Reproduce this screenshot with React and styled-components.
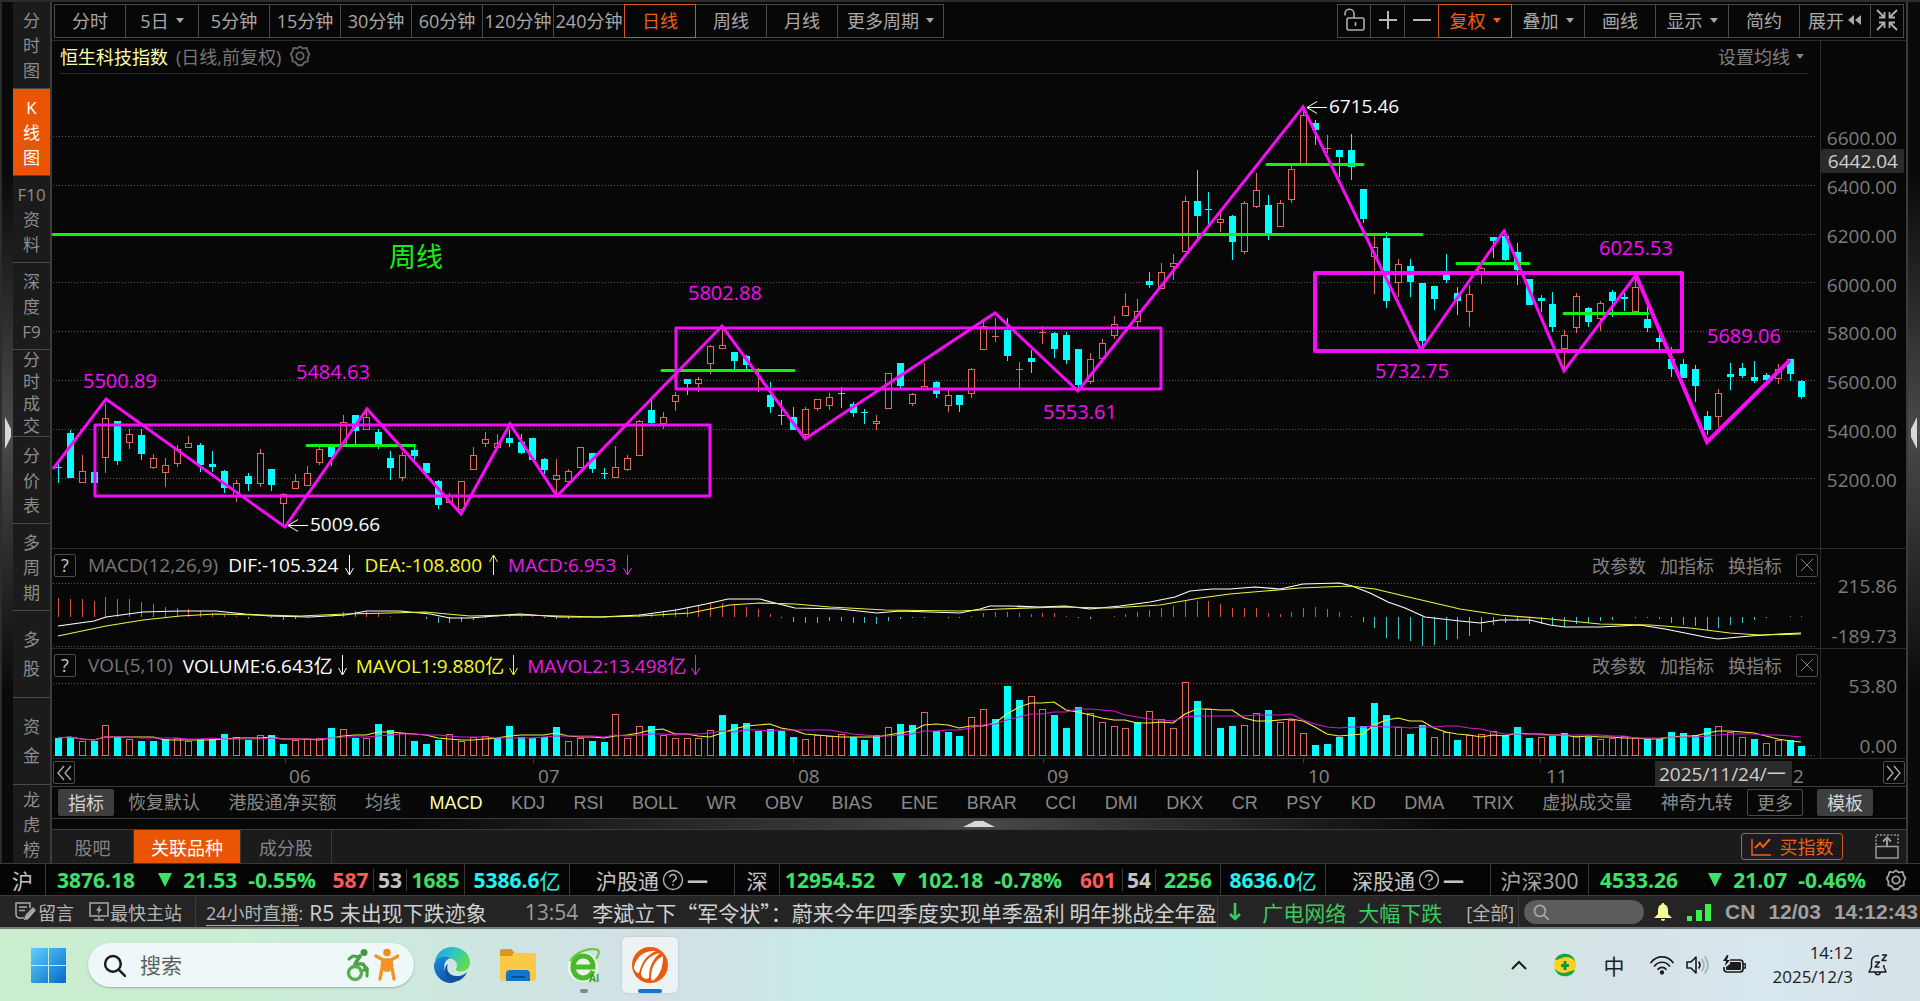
import React, { useState } from 'react';
import styled, { createGlobalStyle, css } from 'styled-components';

const GlobalStyle = createGlobalStyle`
  * { box-sizing: border-box; }

  html, body {
    margin: 0;
    padding: 0;
    background: #070707;
  }

  body, button, input {
    font-family: 'Open Sans', 'Noto Sans CJK SC', sans-serif;
    font-size: 18px;
    font-weight: 400;
  }

  button {
    margin: 0;
    padding: 0;
    border: none;
    background: none;
    color: inherit;
    cursor: pointer;
    white-space: nowrap;
  }

  svg { display: block; flex-shrink: 0; }
`;

/* ---------- data ---------- */

const UP = 1;
const DOWN = 0;

const SIDE_TABS = [
  ['分', '时', '图'],
  ['K', '线', '图'],
  ['F10', '资', '料'],
  ['深', '度', 'F9'],
  ['分', '时', '成', '交'],
  ['分', '价', '表'],
  ['多', '周', '期'],
  ['多', '股'],
  ['资', '金'],
  ['龙', '虎', '榜'],
];

const PERIODS = [
  { label: '分时', w: 72 },
  { label: '5日', w: 74, menu: true },
  { label: '5分钟', w: 72 },
  { label: '15分钟', w: 72 },
  { label: '30分钟', w: 72 },
  { label: '60分钟', w: 72 },
  { label: '120分钟', w: 72 },
  { label: '240分钟', w: 72 },
  { label: '日线', w: 72 },
  { label: '周线', w: 72 },
  { label: '月线', w: 72 },
  { label: '更多周期', w: 107, menu: true },
];

const INDICATORS = [
  '恢复默认', '港股通净买额', '均线', 'MACD', 'KDJ', 'RSI', 'BOLL', 'WR', 'OBV', 'BIAS', 'ENE',
  'BRAR', 'CCI', 'DMI', 'DKX', 'CR', 'PSY', 'KD', 'DMA', 'TRIX', '虚拟成交量', '神奇九转',
];

const PRICE_TICKS = [
  '6600.00', '6400.00', '6200.00', '6000.00', '5800.00', '5600.00', '5400.00', '5200.00',
];

// [direction, high, body top, body bottom, low]
const CANDLES = [
  [0, 463, 467, 468, 483], [0, 430, 433, 478, 478], [1, 455, 471, 482, 483], [0, 470, 472, 483, 483],
  [1, 404, 418, 457, 473], [0, 421, 421, 461, 465], [1, 429, 434, 442, 449], [0, 429, 435, 454, 460],
  [1, 454, 458, 467, 469], [1, 458, 465, 472, 487], [1, 445, 449, 463, 467], [1, 436, 443, 447, 448],
  [0, 443, 445, 465, 472], [0, 451, 464, 467, 472], [0, 470, 471, 488, 493], [1, 480, 483, 495, 502],
  [0, 473, 476, 484, 491], [1, 449, 453, 483, 487], [0, 469, 469, 485, 491], [1, 493, 494, 503, 527],
  [1, 474, 481, 488, 489], [1, 466, 473, 485, 486], [1, 447, 449, 462, 465], [0, 446, 447, 457, 466],
  [1, 415, 422, 446, 447], [0, 415, 415, 431, 444], [1, 410, 417, 429, 429], [0, 429, 432, 444, 449],
  [0, 451, 458, 468, 480], [1, 452, 455, 477, 481], [0, 445, 450, 456, 460], [0, 463, 463, 473, 478],
  [0, 480, 481, 505, 509], [1, 493, 495, 502, 503], [1, 481, 481, 509, 510], [1, 447, 455, 469, 470],
  [1, 432, 439, 443, 447], [1, 434, 443, 447, 447], [0, 430, 438, 443, 447], [0, 434, 442, 453, 454],
  [0, 438, 438, 460, 461], [0, 458, 459, 470, 474], [1, 459, 475, 479, 495], [1, 469, 471, 481, 482],
  [1, 447, 447, 467, 468], [0, 453, 453, 469, 473], [0, 468, 473, 474, 479], [1, 446, 467, 477, 478],
  [1, 455, 458, 469, 471], [1, 420, 421, 455, 455], [0, 398, 410, 423, 424], [1, 412, 417, 423, 429],
  [1, 392, 395, 401, 411], [0, 379, 379, 384, 395], [1, 377, 379, 383, 392], [1, 345, 346, 363, 374],
  [1, 326, 345, 348, 348], [0, 352, 352, 361, 369], [0, 355, 356, 365, 369], [1, 368, 371, 372, 392],
  [0, 382, 395, 407, 413], [0, 400, 415, 416, 425], [0, 407, 417, 430, 430], [1, 407, 409, 434, 438],
  [1, 399, 399, 408, 411], [1, 393, 397, 405, 410], [0, 387, 393, 394, 408], [0, 402, 404, 413, 417],
  [0, 409, 412, 413, 424], [1, 415, 421, 423, 430], [1, 373, 373, 408, 408], [0, 363, 363, 386, 388],
  [1, 393, 394, 403, 406], [1, 363, 386, 389, 389], [0, 381, 382, 394, 398], [1, 390, 395, 405, 412],
  [0, 395, 395, 405, 412], [1, 368, 369, 393, 398], [1, 322, 326, 349, 349], [1, 318, 336, 337, 342],
  [0, 318, 330, 356, 361], [1, 362, 369, 370, 388], [0, 350, 358, 362, 373], [1, 326, 332, 333, 344],
  [0, 332, 333, 349, 358], [0, 332, 335, 360, 364], [0, 349, 349, 385, 388], [1, 353, 359, 381, 384],
  [1, 339, 343, 358, 363], [1, 316, 324, 335, 339], [1, 293, 306, 315, 316], [1, 299, 311, 321, 327],
  [0, 272, 281, 285, 288], [1, 263, 272, 288, 289], [1, 254, 263, 266, 280], [1, 196, 201, 251, 251],
  [0, 170, 201, 216, 239], [0, 192, 209, 210, 225], [1, 213, 219, 222, 232], [0, 215, 216, 242, 260],
  [1, 201, 203, 251, 254], [1, 173, 190, 206, 208], [0, 195, 205, 234, 240], [1, 200, 203, 226, 226],
  [1, 165, 169, 199, 203], [1, 107, 115, 164, 164], [0, 120, 123, 130, 145], [1, 135, 148, 149, 153],
  [0, 150, 150, 157, 177], [0, 134, 150, 167, 180], [0, 189, 189, 219, 223], [1, 235, 247, 256, 294],
  [0, 232, 238, 301, 308], [1, 259, 264, 282, 297], [0, 259, 266, 282, 297], [0, 283, 283, 341, 350],
  [0, 286, 286, 299, 310], [0, 254, 274, 280, 283], [0, 287, 293, 301, 315], [1, 285, 294, 311, 327],
  [1, 267, 268, 274, 284], [0, 237, 237, 241, 258], [0, 230, 236, 260, 261], [0, 243, 252, 270, 285],
  [0, 279, 279, 305, 305], [0, 295, 298, 301, 312], [0, 292, 304, 327, 332], [1, 330, 335, 348, 368],
  [1, 293, 296, 327, 333], [0, 307, 308, 322, 327], [1, 301, 303, 318, 331], [0, 290, 292, 301, 317],
  [0, 293, 297, 299, 311], [1, 278, 287, 311, 312], [0, 303, 319, 328, 332], [0, 331, 338, 342, 349],
  [0, 347, 359, 369, 377], [0, 359, 364, 378, 378], [0, 365, 369, 386, 402], [0, 411, 416, 430, 435],
  [1, 389, 393, 416, 427], [0, 363, 374, 377, 390], [0, 363, 368, 376, 378], [0, 361, 377, 381, 383],
  [0, 373, 375, 380, 382], [1, 364, 369, 378, 384], [0, 359, 359, 374, 381], [0, 380, 381, 397, 399],
];

const MACD_BARS = [
  19, 18, 18, 16, 20, 18, 18, 15, 13, 10, 9, 8, 6, 4, 2, 1, -2, 0, -1, -3, -2, -1, 0, 1, 5, 6, 6, 4, 1, 0,
  0, -2, -6, -6, -5, -3, -1, 1, 2, 1, 1, -1, -2, -2, -1, 0, -1, 0, 1, 3, 3, 6, 8, 10, 12, 15, 14, 13, 10, 8,
  3, -1, -5, -6, -6, -4, -4, -6, -6, -7, -4, -2, -1, -1, 0, -1, -1, 1, 4, 5, 5, 4, 3, 4, 4, 1, -1, -2, 0, 1,
  3, 5, 7, 9, 11, 16, 16, 16, 13, 9, 9, 9, 4, 3, 5, 9, 10, 8, 5, 1, -5, -11, -21, -22, -24, -29, -28, -23,
  -22, -19, -15, -8, -6, -4, -7, -7, -8, -10, -7, -6, -4, -3, 0, -1, -1, -2, -6, -8, -9, -13, -11, -8, -6,
  -3, -1, 0, 1, 1,
];

const DIF_POINTS = '58,626 94,621 106,617 143,612 180,611 216,611 245,614 270,616 310,617 345,615 367,611 400,611 430,614 450,618 470,618 495,616 520,614 560,617 600,617 640,615 676,610 706,604 728,599 760,599 775,603 795,608 840,609 877,613 900,611 960,613 980,609 990,606 1010,606 1040,607 1065,606 1090,609 1120,606 1150,602 1175,597 1190,591 1212,589 1230,589 1255,587 1280,589 1303,584 1340,583 1352,586 1370,593 1388,602 1405,608 1425,617 1460,621 1480,623 1500,620 1530,620 1550,625 1565,627 1600,627 1640,625 1665,629 1685,633 1705,637 1718,639 1750,636 1780,634 1801,633';
const DEA_POINTS = '58,636 106,626 143,620 180,616 216,614 300,616 345,614 390,613 425,612 470,616 520,615 600,617 640,616 690,613 730,605 760,603 795,604 830,607 885,610 960,611 1000,609 1060,607 1110,608 1160,605 1200,598 1230,594 1265,591 1300,588 1350,586 1375,589 1400,595 1430,602 1460,609 1500,615 1550,619 1600,624 1650,625 1690,628 1730,633 1760,635 1801,634';

// tops of the volume bars, negative for a falling day
const VOLUME_BASE = 288;
const VOLUME_TOPS = [
  -234, -230, 247, -243, 199, -230, 240, -243, -243, -237, 238, 245, -237, -237, -222, 235, -240, 229, -225,
  -252, 243, 240, 238, -204, 211, -234, 238, -192, -210, 222, -243, -252, -240, 226, 245, 235, 232, -235,
  -198, -230, -234, -231, -202, 247, 238, -243, -246, 166, 236, 202, -198, 229, 238, 236, 236, 213, -165,
  -192, -189, -213, -207, -213, -231, 241, 229, 232, 226, -232, -240, -226, 205, -192, -195, 160, -214, -216,
  -228, 175, 151, -177, -78, -120, 112, 151, -165, -204, -141, 163, 190, 202, 208, -187, 157, 181, 208, 70,
  -123, 151, -204, -198, 199, 163, -150, 190, 184, 223, -255, -252, -231, -171, -198, -129, -165, 205, -222,
  -195, 235, 220, -240, 228, 226, 217, -225, -201, -234, 235, -228, -220, 232, -230, 241, 238, 232, 236,
  -237, -236, -216, -219, -226, -204, 202, 220, 235, -237, 253, 244, -240, -258,
];

const ZIGZAG = '53,469 106,399 285,527 367,409 461,514 510,424 557,496 722,326 805,439 995,313 1078,391 1303,107 1421,350 1504,231 1564,371 1636,275';

const PRICE_BOXES = [
  { x: 95, y: 425, w: 615, h: 71, stroke: 3 },
  { x: 676, y: 328, w: 485, h: 61, stroke: 3 },
  { x: 1315, y: 273, w: 367, h: 78, stroke: 4 },
];

const LEVELS = [
  [53, 1422, 234], [307, 415, 445], [662, 794, 370], [1267, 1363, 164], [1457, 1529, 263], [1564, 1648, 313],
];

const MARKS = [
  ['5500.89', 83, 388], ['5484.63', 296, 379], ['5802.88', 688, 300], ['5553.61', 1043, 419],
  ['5732.75', 1375, 378], ['6025.53', 1599, 255], ['5689.06', 1707, 343],
];

const MONTHS = [
  ['06', 289, 285], ['07', 538, 533], ['08', 798, 793], ['09', 1047, 1043], ['10', 1308, 1303], ['11', 1546, 1540],
];

const barX = i => Math.round(58 + i * 11.86);

const movingAverage = n => VOLUME_TOPS.map((_, i) => {
  const part = VOLUME_TOPS.slice(Math.max(0, i - n + 1), i + 1);
  const mean = part.reduce((sum, v) => sum + Math.abs(v), 0) / part.length;
  return `${barX(i)},${Math.round(660 + mean / 3)}`;
}).join(' ');

/* ---------- frame ---------- */

const Page = styled.div`
  min-height: 100vh;
  display: flex;
  flex-direction: column;
  color: #9a9a9a;
`;

const Workspace = styled.div`
  display: flex;
  height: 864px;
  border-top: 2px solid #2c2c2c;
  border-bottom: 1px solid #3a3a3a;
`;

const EdgeStrip = styled.button`
  flex: 0 0 ${p => p.$right ? 14 : 13}px;
  display: flex;
  align-items: center;
  justify-content: center;
  border-left: ${p => p.$right ? '2px solid #3a3a3a' : '2px solid #2c2c2c'};
  background: linear-gradient(#0a0a0a 20%, #4a4a4a 50%, #0a0a0a 80%);
`;

const SideNav = styled.nav`
  flex: 0 0 39px;
  display: flex;
  flex-direction: column;
  background: #1b1b1b;
  border-right: 2px solid #3c3c3c;
`;

const SideTab = styled.button`
  flex: 0 0 87px;
  min-height: 0;
  display: flex;
  flex-direction: column;
  align-items: center;
  justify-content: center;
  border-bottom: 1px solid #4a4a4a;
  font-size: 17px;
  line-height: ${p => p.$lines === 4 ? 22 : p.$lines === 2 ? 29 : 25}px;
  color: #8c8c8c;

  &:last-child {
    flex: 1;
    border-bottom: none;
  }

  ${p => p.$active && css`
    background: #ea5504;
    color: #fff;
  `}
`;

const Main = styled.main`
  flex: 1;
  min-width: 0;
  display: flex;
  flex-direction: column;
`;

/* ---------- toolbar ---------- */

const Toolbar = styled.div`
  height: 39px;
  display: flex;
  align-items: center;
  justify-content: space-between;
  padding: 0 3px 0 2px;
  border-bottom: 1px solid #2a2a2a;
`;

const ToolGroup = styled.div`
  display: flex;
`;

const ToolBtn = styled.button`
  width: ${p => p.$w}px;
  height: 34px;
  margin-right: -1px;
  padding-bottom: 2px;
  display: flex;
  align-items: center;
  justify-content: center;
  gap: ${p => p.$tight ? 4 : 7}px;
  border: 1px solid #4a4a4a;
  color: #a8a8a8;
  position: relative;

  ${p => p.$active && css`
    z-index: 1;
    border-color: #d2571c;
    color: #ee5f1a;
  `}
`;

const Caret = styled.span`
  width: 0;
  height: 0;
  border: 4px solid transparent;
  border-top: 5px solid currentColor;
  border-bottom: none;
`;

/* ---------- charts ---------- */

const Panel = styled.section`
  display: flex;
  border-bottom: 1px solid #2a2a2a;
`;

const Plot = styled.div`
  flex: 1;
  min-width: 0;
`;

const Canvas = styled.svg`
  width: 100%;
  height: auto;
  overflow: visible;
  font-size: 19px;
`;

const Axis = styled.div`
  flex: 0 0 86px;
  position: relative;
  display: flex;
  flex-direction: column;
  justify-content: space-between;
  padding: ${p => p.$pad};
  border-left: 1px solid #2c2c2c;
  font-size: 19px;
  line-height: 24px;
  text-align: right;
  color: #7d7d7d;
`;

const CursorPrice = styled.div`
  position: absolute;
  top: 108px;
  right: 2px;
  left: 0;
  padding-right: 6px;
  border-radius: 2px;
  background: #2b2b2b;
  color: #cfcfcf;
`;

const TitleRow = styled.div`
  height: 33px;
  margin: 0 12px 0 8px;
  padding-bottom: 2px;
  display: flex;
  align-items: center;
  gap: 8px;
  border-bottom: 1px solid #2a2a2a;
`;

const Symbol = styled.h1`
  margin: 0;
  font-size: 18px;
  font-weight: 400;
  color: #ffffa8;
`;

const Muted = styled.span`
  color: #777;
`;

const AverageBtn = styled.button`
  margin-left: auto;
  display: flex;
  align-items: center;
  gap: 6px;
  padding-right: 4px;
  color: #808080;
`;

const StudyRow = styled.div`
  height: 34px;
  padding: 0 2px 2px;
  display: flex;
  align-items: center;
  font-size: 19px;
`;

const SquareBtn = styled.button`
  width: 22px;
  height: 23px;
  display: flex;
  align-items: center;
  justify-content: center;
  border: 1px solid #4c4c4c;
  border-radius: 2px;
  font-size: 18px;
  line-height: 20px;
  color: ${p => p.$dim ? '#808080' : '#c8c8c8'};
`;

const StudyName = styled.span`
  margin: 0 10px 0 12px;
  color: #777;
`;

const Reading = styled.span`
  display: flex;
  align-items: center;
  gap: ${p => p.$tight ? 4 : 6}px;
  margin-right: ${p => p.$tight ? 9 : 10}px;
  color: ${p => p.$color};
`;

const StudyActions = styled.div`
  margin-left: auto;
  display: flex;
  align-items: center;
  gap: 14px;
  color: #828282;
`;

const TimeRow = styled.div`
  height: 28px;
  display: flex;
  position: relative;
  border-bottom: 1px solid #3c3c3c;
`;

const TimeSpacer = styled.div`
  flex: 0 0 86px;
`;

const ScrollBtn = styled(SquareBtn)`
  position: absolute;
  top: 2px;
  ${p => p.$end ? 'right: 1px;' : 'left: 1px;'}
`;

/* ---------- indicators and tabs ---------- */

const IndicatorRow = styled.div`
  height: 32px;
  padding: 0 33px 0 6px;
  display: flex;
  align-items: center;
  gap: 14px;
  border-bottom: 1px solid #3c3c3c;
`;

const IndicatorList = styled.div`
  flex: 1;
  display: flex;
  align-items: baseline;
  justify-content: space-between;
`;

const IndicatorBtn = styled.button`
  font-family: 'Liberation Sans', 'Noto Sans CJK SC', sans-serif;
  line-height: 26px;
  color: ${p => p.$active ? '#ffffa8' : '#8a8a8a'};
`;

const ChipBtn = styled.button`
  width: 56px;
  height: 27px;
  border-radius: 2px;
  border: 1px solid ${p => p.$filled ? '#3e3e3e' : '#4a4a4a'};
  background: ${p => p.$filled ? '#3e3e3e' : 'transparent'};
  color: ${p => p.$filled ? '#d4d4d4' : '#8a8a8a'};
  line-height: 24px;
`;

const Splitter = styled.button`
  height: 11px;
  width: 100%;
  display: flex;
  align-items: center;
  justify-content: center;
  border-bottom: 1px solid #3c3c3c;
  background: linear-gradient(90deg, #070707 18%, #484848 50%, #070707 76%);
`;

const TabRow = styled.div`
  flex: 1;
  padding-right: 7px;
  display: flex;
  align-items: center;
  background: #1b1b1b;
`;

const Tab = styled.button`
  align-self: stretch;
  width: ${p => p.$w}px;
  border-right: 1px solid #383838;
  color: #858585;

  ${p => p.$active && css`
    background: #ea5504;
    color: #fff;
  `}
`;

const BuyBtn = styled.button`
  width: 102px;
  height: 27px;
  margin-left: auto;
  margin-right: 32px;
  display: flex;
  align-items: center;
  justify-content: center;
  gap: 9px;
  border: 1px solid #d2571c;
  border-radius: 3px;
  color: #ee5f1a;
  line-height: 24px;
`;

/* ---------- quote bar ---------- */

const QuoteBar = styled.div`
  height: 32px;
  display: flex;
  align-items: center;
  border-bottom: 1px solid #3a3a3a;
  background: #050505;
  font-size: 21px;
  color: #c4c4c4;
`;

const QuoteCell = styled.div`
  flex: 0 0 ${p => p.$w}px;
  height: ${p => p.$inner ? 22 : 31}px;
  display: flex;
  align-items: center;
  justify-content: center;
  gap: ${p => p.$gap || 0}px;
  border-right: ${p => p.$rule ? '1px solid #3a3a3a' : 'none'};
  color: ${p => p.$color || 'inherit'};
  font-weight: ${p => p.$bold ? 700 : 400};
  white-space: nowrap;

  i {
    font-style: normal;
    font-weight: 400;
  }

  b { font-weight: 700; }
`;

const GearBtn = styled.button`
  margin-left: auto;
  margin-right: 20px;
`;

const Triangle = styled.span`
  width: 0;
  height: 0;
  border: 7px solid transparent;
  border-top: 14px solid #3ee068;
  border-bottom: none;
`;

/* ---------- news bar ---------- */

const NewsBar = styled.div`
  height: 33px;
  display: flex;
  align-items: center;
  border-bottom: 2px solid #767c79;
  background: #242424;
  white-space: nowrap;
  color: #b4b4b4;
`;

const NewsTool = styled.button`
  display: flex;
  align-items: center;
  gap: ${p => p.$close ? 1 : 2}px;
  margin-left: ${p => p.$near ? 10 : 15}px;
`;

const NewsSep = styled.span`
  width: 1px;
  height: 30px;
  margin-left: ${p => p.$gap || 0}px;
  background: #3c3c3c;
`;

const LiveLink = styled.a`
  margin-left: 10px;
  color: #b4b4b4;
  text-decoration: none;

  span { border-bottom: 1px solid #b4b4b4; }
`;

const Marquee = styled.div`
  flex: 1;
  min-width: 0;
  height: 31px;
  margin-left: 6px;
  overflow: hidden;
  display: flex;
  align-items: center;
  gap: 14px;
  font-size: 21px;
  color: #d0d0d0;

  time {
    margin-left: 24px;
    color: #9c9c9c;
  }
`;

const Headline = styled.span`
  font-family: 'Noto Sans CJK SC', sans-serif;
`;

const Alert = styled.a`
  display: flex;
  align-items: center;
  gap: 12px;
  margin: 0 24px 0 10px;
  font-size: 21px;
  color: #3dc85e;
  text-decoration: none;

  svg { margin-right: 8px; }
`;

const BarSearch = styled.label`
  width: 120px;
  height: 24px;
  margin-left: 5px;
  padding: 0 9px;
  display: flex;
  align-items: center;
  border-radius: 12px;
  background: #5c5c5c;

  input {
    width: 76px;
    border: none;
    outline: none;
    background: none;
    color: #ddd;
    font-size: 14px;
  }
`;

const Clock = styled.div`
  display: flex;
  gap: 13px;
  margin: 0 2px 0 14px;
  font-family: 'Liberation Sans', sans-serif;
  font-size: 21px;
  font-weight: 700;
  color: #a0a0a0;
`;

/* ---------- desktop taskbar ---------- */

const Taskbar = styled.footer`
  flex: 1;
  min-height: 72px;
  display: flex;
  align-items: center;
  padding: 0 32px 0 31px;
  background: linear-gradient(90deg, #caeccf 0%, #cbeed3 12%, #cde6e0 24%, #d2e0e6 34%, #c6eae6 44%, #c4ece6 62%, #c9ecdc 72%, #d6e2e6 84%, #d8e6ee 92%, #d6e2e8 100%);
  color: #1c1c1c;
`;

const TaskSearch = styled.label`
  width: 326px;
  height: 44px;
  margin: 0 10px 0 22px;
  padding: 0 15px;
  display: flex;
  align-items: center;
  gap: 12px;
  border-radius: 22px;
  background: #eff8f8;
  box-shadow: 0 1px 2px rgba(0, 0, 0, 0.25);

  input {
    flex: 1;
    min-width: 0;
    border: none;
    outline: none;
    background: none;
    font-size: 21px;
    color: #333;
  }

  input::placeholder { color: #5a5f60; opacity: 1; }
`;

const TaskApp = styled.button`
  position: relative;
  width: 56px;
  height: 56px;
  margin-right: 10px;
  display: flex;
  align-items: center;
  justify-content: center;
  border-radius: 5px;
  background: ${p => p.$active ? 'rgba(255,255,255,0.6)' : 'transparent'};
  box-shadow: ${p => p.$active ? '0 0 2px rgba(0,0,0,0.2)' : 'none'};

  &::after {
    content: '';
    position: absolute;
    bottom: 0;
    width: ${p => p.$active ? 24 : 8}px;
    height: 4px;
    border-radius: 2px;
    background: ${p => p.$active ? '#0a78d4' : p.$running ? '#7f8b8b' : 'transparent'};
  }
`;

const Tray = styled.div`
  margin-left: auto;
  display: flex;
  align-items: center;
`;

const TrayBtn = styled.button`
  margin-right: ${p => p.$gap}px;
  font-size: 21px;
`;

const TrayTime = styled.div`
  margin-right: 15px;
  font-size: 17px;
  line-height: 24px;
  text-align: right;
`;

/* ---------- icons ---------- */

const HexGear = ({ size = 22, color = '#666' }) => (
  <svg width={size} height={size} viewBox="0 0 24 24" fill="none" stroke={color} strokeWidth="2" strokeLinejoin="round">
    <path d="M12 1.5l3 2.2 4.2-.6 1.200 4 2 2.900-2 4 .2 3.600-3.800 1.400-2.800 3.500-2-.8-2 .8-2.800-3.500-3.600-1.400.2-3.600-2-4 2-2.900 1.200-4 4.200.6z" />
    <circle cx="12" cy="12" r="4" />
  </svg>
);

const TrendArrow = ({ up }) => (
  <svg width="10" height="22" viewBox="0 0 10 22" fill="none" stroke="currentColor" strokeWidth="1">
    <path d={up ? 'M5.5 1v20M1.5 8l4-7 4 7' : 'M5.5 1v20M1.5 14l4 7 4-7'} />
  </svg>
);

const LockIcon = () => (
  <svg width="22" height="24" viewBox="0 0 22 24" fill="none" stroke="#b0b0b0" strokeWidth="1.6">
    <rect x="4" y="10" width="17" height="12" rx="1.5" />
    <path d="M12.500 14v4M11 10V6a4.500 4.500 0 0 0-9-0.500v2" />
  </svg>
);

const RewindIcon = () => (
  <svg width="14" height="12" viewBox="0 0 14 12" fill="currentColor">
    <path d="M6 1v10L0 6zM13 1v10L7 6z" />
  </svg>
);

const ShrinkIcon = () => (
  <svg width="22" height="22" viewBox="0 0 22 22" fill="none" stroke="#b0b0b0" strokeWidth="1.8">
    <path d="M1 1l7 7M3 8.500h5.500V3M21 1l-7 7M19 8.500h-5.500V3M1 21l7-7M3 13.500h5.500V19M21 21l-7-7M19 13.500h-5.500V19" />
  </svg>
);

const CrossIcon = () => (
  <svg width="12" height="12" viewBox="0 0 12 12" stroke="currentColor"><path d="M0 0l12 12M12 0L0 12" /></svg>
);

const Chevrons = ({ flip }) => (
  <svg width="16" height="16" viewBox="0 0 16 16" fill="none" stroke="#b0b0b0" strokeWidth="1.3">
    <path d={flip ? 'M1 1l6 7-6 7M8 1l6 7-6 7' : 'M8 1L2 8l6 7M15 1L9 8l6 7'} />
  </svg>
);

const HelpCircle = () => (
  <svg width="22" height="22" viewBox="0 0 22 22" fill="none" stroke="#b4b4b4" strokeWidth="1.4">
    <circle cx="11" cy="11" r="9.500" />
    <path d="M7.800 8.500a3.200 3 0 1 1 4.600 2.700c-1 .6-1.400 1-1.400 2.200M11 15v1.800" />
  </svg>
);

const NoteIcon = () => (
  <svg width="21" height="19" viewBox="0 0 21 19" fill="none" stroke="#aaa" strokeWidth="1.500">
    <path d="M15 6V1H1v11c0 3 1 4 4 4h4M4 5h8M4 8.500h6M10 17l1-3.500 7-7.500 2 2-7 8z" />
    <path d="M11 17l8-9" strokeWidth="3" />
  </svg>
);

const StationIcon = () => (
  <svg width="20" height="19" viewBox="0 0 20 19" fill="none" stroke="#888" strokeWidth="2">
    <rect x="1" y="1" width="18" height="13" />
    <path d="M10 14v4M5 18h10" />
    <path d="M11.500 3L7 8.500h2.500L8.500 12.500 13 7h-2.500z" fill="#aaa" stroke="none" />
  </svg>
);

const SearchGlyph = ({ size, color, width = 2 }) => (
  <svg width={size} height={size} viewBox="0 0 22 22" fill="none" stroke={color} strokeWidth={width} strokeLinecap="round">
    <circle cx="9.500" cy="9.500" r="7.500" />
    <path d="M15 15l6 6" />
  </svg>
);

const BellIcon = () => (
  <svg width="18" height="18" viewBox="0 0 18 18" fill="#f7f79c">
    <path d="M9 0c1 0 1.500.7 1.500 1.500C13 2.200 14 4.500 14 7v4l4 4H0l4-4V7c0-2.500 1-4.800 3.500-5.500C7.500.7 8 0 9 0zM7 16h4c0 2.500-4 2.500-4 0z" />
  </svg>
);

const SignalIcon = () => (
  <svg width="24" height="18" viewBox="0 0 24 18" fill="#3ef04a">
    <path d="M0 13h5v5H0zM9 7h6v11H9zM18 1h6v17h-6z" />
  </svg>
);

const WindowsLogo = () => (
  <svg width="35" height="35" viewBox="0 0 35 35">
    <defs>
      <linearGradient id="win" x1="0" y1="0" x2="1" y2="1">
        <stop offset="0" stopColor="#5cd0fa" />
        <stop offset="1" stopColor="#0669ca" />
      </linearGradient>
    </defs>
    <path fill="url(#win)" d="M1 0h16v17H0V1q0-1 1-1zM18 0h16q1 0 1 1v16H18zM0 18h17v17H1q-1 0-1-1zM18 18h17v16q0 1-1 1H18z" />
  </svg>
);

const AccessArt = () => (
  <svg width="54" height="34" viewBox="0 0 54 34" fill="none" strokeLinecap="round" strokeLinejoin="round">
    <circle cx="19" cy="4.500" r="3.500" fill="#46953f" />
    <path d="M15 8l-5 8h8l4 6h-3" stroke="#4ba244" strokeWidth="3.600" />
    <path d="M15 9L8 8 4 11M22 20v8" stroke="#4ba244" strokeWidth="3" />
    <circle cx="10" cy="25" r="6.500" stroke="#58b04c" strokeWidth="3.400" />
    <circle cx="42" cy="4.500" r="3.800" fill="#f58b1e" />
    <path d="M31 8l7 4h8l7-4M38 12l-1 8-2 11M46 12l1 8 2 11M39 13l1 9h4l1-9" stroke="#f79226" strokeWidth="3.400" />
    <path d="M39 11h6v10h-6z" fill="#f79226" />
  </svg>
);

const EdgeLogo = () => (
  <svg width="36" height="36" viewBox="0 0 36 36">
    <defs>
      <linearGradient id="edgeTop" x1="0" y1="0" x2="1" y2="0.500">
        <stop offset="0" stopColor="#1f9ede" />
        <stop offset="0.500" stopColor="#30c4c8" />
        <stop offset="1" stopColor="#5fdc4a" />
      </linearGradient>
      <linearGradient id="edgeBody" x1="0" y1="0" x2="0.600" y2="1">
        <stop offset="0" stopColor="#1c8fdc" />
        <stop offset="1" stopColor="#0f4fa6" />
      </linearGradient>
    </defs>
    <path fill="url(#edgeTop)" d="M1 14C3 5 10 0 18 0c10 0 18 7 18 15 0 6-4 9.500-9 9.500-4 0-6-1.500-5-3 2-2 1.500-9-6-10C9 10.500 3 12 1 14z" />
    <path fill="url(#edgeBody)" d="M0 18C1 11 9 8 16 11c-5 2-7 7-5 13 2 5 7 9 13 9-2 2-5 3-8 3C7 35.500-.5 27 0 18z" />
    <path fill="#12509f" d="M14 17c-3 6 2 13 10 12 4 0 7-2 9-4-2 5-6 8-9 9-7 1-13-4-13-11 0-3 1-5 3-6z" />
  </svg>
);

const FolderIcon = () => (
  <svg width="36" height="34" viewBox="0 0 36 34">
    <path fill="#d99a1c" d="M0 3q0-2 2-2h9l4 4h-2v8H0z" />
    <path fill="#fbc948" d="M0 8h12l3-3h19q2 0 2 2v23q0 3-3 3H3q-3 0-3-3z" />
    <path fill="#1176c8" d="M6 33v-7q0-4 4-4h16q4 0 4 4v7z" />
    <path fill="#0a4f96" d="M11 28h14v2H11z" />
  </svg>
);

const BrowserIcon = () => (
  <svg width="34" height="36" viewBox="0 0 34 36" fill="none">
    <ellipse cx="16" cy="20" rx="15.500" ry="15" fill="#eaf7e6" />
    <path d="M26 24c-2 5-6 7-10 7-6 0-10-5-10-11S10 9 16 9s10 4 10 11H8" stroke="#4cb82c" strokeWidth="5" />
    <path d="M3 14C9 5 22 0 31 3c2 2 0 6-2 9" stroke="#62c840" strokeWidth="2" />
    <text x="22" y="35" fontSize="10" fontWeight="700" fill="#3c9c22">AI</text>
  </svg>
);

const BrokerLogo = () => (
  <svg width="38" height="38" viewBox="0 0 38 38">
    <circle cx="19" cy="19" r="18" fill="#ea5a0c" />
    <path fill="#fff" d="M3 21C5 11 13 4 25 5C16 9 11 15 8 27C6 27 3 25 3 21z" />
    <path fill="#fff" d="M10 27C12 17 18 9 29 7C22 13 18 20 18 32C14 34 10 31 10 27z" />
    <path fill="#fff" d="M20 32C20 22 24 14 32 10C32 19 30 28 23 34C21 35 20 34 20 32z" />
  </svg>
);

const GuardIcon = () => (
  <svg width="24" height="24" viewBox="0 0 24 24">
    <circle cx="12" cy="12" r="11" fill="#fbd224" />
    <path d="M2 7C4 2 9 0 14 1c4 .5 7 3 8 7-4-4-9-5-13-3-3 1-5 2-7 2zM22 17c-2 5-7 7-12 6-4-.5-7-3-8-7 4 4 9 5 13 3 3-1 5-2 7-2z" fill="#18a24a" />
    <path d="M12 8v9M8 12.500h8" stroke="#12983c" strokeWidth="3" />
  </svg>
);

const WifiIcon = () => (
  <svg width="24" height="20" viewBox="0 0 24 20" fill="none" stroke="#1c1c1c" strokeWidth="1.700" strokeLinecap="round">
    <path d="M1 7.500c6-7.500 16-7.500 22 0M4.500 11c4-5 11-5 15 0M8 14.300c2-2.700 6-2.700 8 0" />
    <circle cx="12" cy="17.500" r="1.300" fill="#1c1c1c" />
  </svg>
);

const VolumeIcon = () => (
  <svg width="24" height="20" viewBox="0 0 24 20" fill="none" stroke="#1c1c1c" strokeWidth="1.600" strokeLinejoin="round" strokeLinecap="round">
    <path d="M1 7v6h4l5 5V2L5 7z" />
    <path d="M13 7q2 3 0 6" />
    <path d="M16 4.500q4 5.500 0 11M19 2q6 8 0 16" stroke="#9fb0b2" />
  </svg>
);

const BatteryIcon = () => (
  <svg width="24" height="20" viewBox="0 0 24 20" fill="none" stroke="#1c1c1c" strokeWidth="1.700">
    <path d="M8 5h10q3 0 3 3v6q0 3-3 3H5q-3 0-3-3v-2M21 9h2.500v4H21" />
    <path d="M8 7h10q1 0 1 1v6q0 1-1 1H5q-1 0-1-1v-2l4-3z" fill="#1c1c1c" stroke="none" />
    <path d="M5 0L1 6h3l-1 5 5-6H5l1.500-5z" fill="#1c1c1c" stroke="none" />
  </svg>
);

const SnoozeIcon = () => (
  <svg width="20" height="22" viewBox="0 0 20 22" fill="none" stroke="#1c1c1c" strokeWidth="1.500" strokeLinejoin="round">
    <path d="M11 2C6 1 3.500 4 3.500 8v5L1 18h17l-2.200-5v-2M7 18.500c1 3 4.500 3 5.500 0" />
    <path d="M7 8h4.500L7 13h4.500M14 1h4.500L14 6.500h4.500" />
  </svg>
);

const ChartIcon = () => (
  <svg width="20" height="18" viewBox="0 0 20 18" fill="none" stroke="currentColor" strokeWidth="1.500">
    <path d="M1 1v16h19" />
    <path d="M4 10l5-5 3 4 7-8" strokeWidth="2" />
  </svg>
);

const PopUpIcon = () => (
  <svg width="24" height="25" viewBox="0 0 24 25" fill="none" stroke="#9a9a9a" strokeWidth="1.500">
    <path d="M1 11V1h22v10" strokeDasharray="2 1.500" />
    <path d="M1 12.500h22V24H1z" />
    <path d="M12 12V4M8 7.500l4-4 4 4" strokeWidth="2" />
  </svg>
);

/* ---------- chart drawings ---------- */

const Candle = ({ x, data }) => {
  const [dir, high, top, bottom, low] = data;
  const color = dir === UP ? '#e0685c' : '#00ffff';
  return (
    <g stroke={color} fill={color}>
      {high < top && <path d={`M${x + 0.5} ${high}V${top}`} />}
      {low > bottom && <path d={`M${x + 0.5} ${bottom}V${low}`} />}
      {dir === DOWN || bottom - top < 2 ? (
        <rect x={x - 3} y={top} width="7" height={Math.max(bottom - top, 1)} stroke="none" />
      ) : (
        <rect x={x - 2.5} y={top + 0.5} width="6" height={bottom - top} fill="none" />
      )}
    </g>
  );
};

const DottedLines = ({ ys }) => ys.map(y => (
  <path key={y} d={`M53 ${y + 0.5}H1816`} stroke="#585858" strokeDasharray="1 2" />
));

const PriceChart = () => (
  <Canvas viewBox="52 74 1768 474" role="img" aria-label="恒生科技指数 日线">
    <g shapeRendering="crispEdges">
      <DottedLines ys={[136, 185, 234, 282, 331, 380, 429, 478]} />
      {CANDLES.map((c, i) => <Candle key={i} x={barX(i)} data={c} />)}
    </g>
    <g stroke="#12f012" strokeWidth="3" strokeLinecap="round">
      {LEVELS.map(([from, to, y]) => <path key={from} d={`M${from} ${y + 0.5}H${to}`} />)}
    </g>
    <g fill="none" stroke="#f80cf8">
      {PRICE_BOXES.map(b => (
        <rect key={b.x} x={b.x} y={b.y} width={b.w} height={b.h} strokeWidth={b.stroke} strokeLinejoin="round" />
      ))}
      <polyline points={ZIGZAG} strokeWidth="3" />
      <polyline points="1636,275 1707,442 1790,360" strokeWidth="4" />
    </g>
    <g stroke="#fff" fill="none">
      <path d="M1307 107.500H1327M1317 101.500L1307 107.500L1317 113.500" />
      <path d="M288 525.500H308M298 519.500L288 525.500L298 531.500" />
    </g>
    <text x="1329" y="113" fill="#fff">6715.46</text>
    <text x="310" y="531" fill="#fff">5009.66</text>
    <g fill="#f80cf8" fontSize="20">
      {MARKS.map(([label, x, y]) => <text key={label} x={x} y={y}>{label}</text>)}
    </g>
    <text x="389" y="267" fill="#12f012" fontSize="27">周线</text>
  </Canvas>
);

const MacdChart = () => (
  <Canvas viewBox="52 583 1768 65" role="img" aria-label="MACD">
    <g shapeRendering="crispEdges">
      <DottedLines ys={[583, 646]} />
      {MACD_BARS.map((v, i) => v !== 0 && (
        <path key={i} d={`M${barX(i) + 0.5} 617V${617 - v}`} stroke={v > 0 ? '#d8524a' : '#3cc8c8'} />
      ))}
    </g>
    <polyline points={DIF_POINTS} fill="none" stroke="#fff" strokeWidth="1.2" />
    <polyline points={DEA_POINTS} fill="none" stroke="#f0f03c" strokeWidth="1.2" />
  </Canvas>
);

const VolumeChart = () => (
  <Canvas viewBox="52 683 1768 75" role="img" aria-label="VOL">
    <g shapeRendering="crispEdges">
      <DottedLines ys={[683, 755]} />
      {VOLUME_TOPS.map((v, i) => {
        const height = Math.round((VOLUME_BASE - Math.abs(v)) / 3);
        return v > 0 ? (
          <rect key={i} x={barX(i) - 2.5} y={755.5 - height} width="6" height={height} fill="#070707" stroke="#e0685c" />
        ) : (
          <rect key={i} x={barX(i) - 3} y={756 - height} width="7" height={height} fill="#00ffff" />
        );
      })}
    </g>
    <polyline points={movingAverage(5)} fill="none" stroke="#f0f03c" strokeWidth="1.2" />
    <polyline points={movingAverage(10)} fill="none" stroke="#d41ad4" strokeWidth="1.2" />
  </Canvas>
);

const TimeAxis = () => (
  <Canvas viewBox="52 759 1768 27" role="img" aria-label="日期">
    {MONTHS.map(([label, x, tick]) => (
      <g key={label}>
        <path d={`M${tick + 0.5} 759v4`} stroke="#3c3c3c" />
        <text x={x} y="783" fill="#858585">{label}</text>
      </g>
    ))}
    <rect x="1655" y="761" width="137" height="25" fill="#2b2b2b" />
    <text x="1659" y="781" fill="#d0d0d0">2025/11/24/一</text>
    <text x="1793" y="783" fill="#858585">2</text>
  </Canvas>
);

const StudyHeader = ({ name, readings, tight }) => (
  <StudyRow>
    <SquareBtn aria-label={`${name} 说明`}>?</SquareBtn>
    <StudyName>{name}</StudyName>
    {readings.map(r => (
      <Reading key={r.text} $color={r.color} $tight={tight}>{r.text}<TrendArrow up={r.up} /></Reading>
    ))}
    <StudyActions>
      <button>改参数</button>
      <button>加指标</button>
      <button>换指标</button>
      <SquareBtn $dim aria-label="关闭"><CrossIcon /></SquareBtn>
    </StudyActions>
  </StudyRow>
);

const GREEN = '#3ee068';

const MarketQuote = ({ price, change, percent, wide }) => (
  <>
    <QuoteCell $w={100} $bold $color={GREEN}>{price}</QuoteCell>
    <QuoteCell $w={wide} $bold $color={GREEN} $gap={11}>
      <Triangle /><span>{change}</span><span>{percent}</span>
    </QuoteCell>
  </>
);

const Connect = ({ label }) => (
  <QuoteCell $w={165} $rule $gap={3}>
    <span>{label}</span>
    <HelpCircle />
    <b>—</b>
  </QuoteCell>
);

export default function App() {
  const [sideTab, setSideTab] = useState(1);
  const [period, setPeriod] = useState('日线');
  const [indicator, setIndicator] = useState('MACD');
  const [tab, setTab] = useState('关联品种');

  return (
    <Page lang="zh-CN">
      <GlobalStyle />
      <Workspace>
        <EdgeStrip aria-label="展开左侧">
          <svg width="6" height="32" viewBox="0 0 6 32" fill="#d8d8d8"><path d="M0 0l6 12v8L0 32z" /></svg>
        </EdgeStrip>
        <SideNav>
          {SIDE_TABS.map((lines, i) => (
            <SideTab key={lines.join('')} $lines={lines.length} $active={sideTab === i} onClick={() => setSideTab(i)}>
              {lines.map(line => <span key={line}>{line}</span>)}
            </SideTab>
          ))}
        </SideNav>

        <Main>
          <Toolbar>
            <ToolGroup>
              {PERIODS.map(p => (
                <ToolBtn key={p.label} $w={p.w} $active={period === p.label} onClick={() => setPeriod(p.label)}>
                  {p.label}
                  {p.menu && <Caret />}
                </ToolBtn>
              ))}
            </ToolGroup>
            <ToolGroup>
              <ToolBtn $w={34} aria-label="锁定"><LockIcon /></ToolBtn>
              <ToolBtn $w={35} aria-label="放大">
                <svg width="18" height="18" viewBox="0 0 18 18" stroke="#b8b8b8" strokeWidth="2"><path d="M0 9h18M9 0v18" /></svg>
              </ToolBtn>
              <ToolBtn $w={35} aria-label="缩小">
                <svg width="18" height="18" viewBox="0 0 18 18" stroke="#b8b8b8" strokeWidth="2"><path d="M0 9h18" /></svg>
              </ToolBtn>
              <ToolBtn $w={74} $active>复权<Caret /></ToolBtn>
              <ToolBtn $w={74}>叠加<Caret /></ToolBtn>
              <ToolBtn $w={72}>画线</ToolBtn>
              <ToolBtn $w={74}>显示<Caret /></ToolBtn>
              <ToolBtn $w={72}>简约</ToolBtn>
              <ToolBtn $w={72} $tight>展开<RewindIcon /></ToolBtn>
              <ToolBtn $w={34} aria-label="收起"><ShrinkIcon /></ToolBtn>
            </ToolGroup>
          </Toolbar>

          <Panel>
            <Plot>
              <TitleRow>
                <Symbol>恒生科技指数</Symbol>
                <Muted>(日线,前复权)</Muted>
                <HexGear />
                <AverageBtn>设置均线<Caret /></AverageBtn>
              </TitleRow>
              <PriceChart />
            </Plot>
            <Axis $pad="85px 9px 56px 0">
              {PRICE_TICKS.map(t => <span key={t}>{t}</span>)}
              <CursorPrice>6442.04</CursorPrice>
            </Axis>
          </Panel>

          <Panel>
            <Plot>
              <StudyHeader
                name="MACD(12,26,9)"
                readings={[
                  { text: 'DIF:-105.324', color: '#fff' },
                  { text: 'DEA:-108.800', color: '#f6f62a', up: true },
                  { text: 'MACD:6.953', color: '#e81ee8' },
                ]}
              />
              <MacdChart />
            </Plot>
            <Axis $pad="25px 9px 0 0">
              <span>215.86</span>
              <span>-189.73</span>
            </Axis>
          </Panel>

          <Panel>
            <Plot>
              <StudyHeader
                tight
                name="VOL(5,10)"
                readings={[
                  { text: 'VOLUME:6.643亿', color: '#fff' },
                  { text: 'MAVOL1:9.880亿', color: '#f6f62a' },
                  { text: 'MAVOL2:13.498亿', color: '#e81ee8' },
                ]}
              />
              <VolumeChart />
            </Plot>
            <Axis $pad="25px 9px 0 0">
              <span>53.80</span>
              <span>0.00</span>
            </Axis>
          </Panel>

          <TimeRow>
            <ScrollBtn aria-label="向前"><Chevrons /></ScrollBtn>
            <Plot><TimeAxis /></Plot>
            <TimeSpacer />
            <ScrollBtn $end aria-label="向后"><Chevrons flip /></ScrollBtn>
          </TimeRow>

          <IndicatorRow>
            <ChipBtn $filled>指标</ChipBtn>
            <IndicatorList>
              {INDICATORS.map(name => (
                <IndicatorBtn key={name} $active={indicator === name} onClick={() => setIndicator(name)}>{name}</IndicatorBtn>
              ))}
            </IndicatorList>
            <ChipBtn>更多</ChipBtn>
            <ChipBtn $filled>模板</ChipBtn>
          </IndicatorRow>

          <Splitter aria-label="展开下方">
            <svg width="32" height="6" viewBox="0 0 32 6" fill="#d8d8d8"><path d="M0 6L12 0h8l12 6z" /></svg>
          </Splitter>

          <TabRow>
            {[['股吧', 82], ['关联品种', 107], ['成分股', 91]].map(([name, w]) => (
              <Tab key={name} $w={w} $active={tab === name} onClick={() => setTab(name)}>{name}</Tab>
            ))}
            <BuyBtn><ChartIcon />买指数</BuyBtn>
            <button aria-label="弹出"><PopUpIcon /></button>
          </TabRow>
        </Main>

        <EdgeStrip $right aria-label="展开右侧">
          <svg width="6" height="32" viewBox="0 0 6 32" fill="#d8d8d8"><path d="M6 0L0 12v8l6 12z" /></svg>
        </EdgeStrip>
      </Workspace>

      <QuoteBar>
        <QuoteCell $w={46} $rule>沪</QuoteCell>
        <MarketQuote price="3876.18" change="21.53" percent="-0.55%" wide={182} />
        <QuoteCell $w={46} $inner $rule $bold $color="#fa5a5a">587</QuoteCell>
        <QuoteCell $w={33} $inner $rule $bold>53</QuoteCell>
        <QuoteCell $w={58} $rule $bold $color={GREEN}>1685</QuoteCell>
        <QuoteCell $w={105} $rule $bold $color="#1ef4f4">5386.6<i>亿</i></QuoteCell>
        <Connect label="沪股通" />
        <QuoteCell $w={45} $rule>深</QuoteCell>
        <MarketQuote price="12954.52" change="102.18" percent="-0.78%" wide={194} />
        <QuoteCell $w={49} $inner $rule $bold $color="#fa5a5a">601</QuoteCell>
        <QuoteCell $w={33} $inner $rule $bold>54</QuoteCell>
        <QuoteCell $w={65} $rule $bold $color={GREEN}>2256</QuoteCell>
        <QuoteCell $w={105} $rule $bold $color="#1ef4f4">8636.0<i>亿</i></QuoteCell>
        <Connect label="深股通" />
        <QuoteCell $w={98} $rule $color="#a4a4a4">沪深300</QuoteCell>
        <MarketQuote price="4533.26" change="21.07" percent="-0.46%" wide={196} />
        <GearBtn aria-label="设置"><HexGear color="#a4a4a4" /></GearBtn>
      </QuoteBar>

      <NewsBar>
        <NewsTool><NoteIcon />留言</NewsTool>
        <NewsTool $close><StationIcon />最快主站</NewsTool>
        <NewsSep $gap={13} />
        <LiveLink href="#live"><span>24小时直播</span>:</LiveLink>
        <Marquee>
          <span>R5 未出现下跌迹象</span>
          <time>13:54</time>
          <Headline>李斌立下“军令状”：蔚来今年四季度实现单季盈利 明年挑战全年盈利</Headline>
        </Marquee>
        <NewsSep />
        <Alert href="#alert">
          <svg width="14" height="18" viewBox="0 0 14 18" fill="none" stroke="currentColor" strokeWidth="2.600"><path d="M7 0v16M2 11l5 5 5-5" /></svg>
          <span>广电网络</span>
          <span>大幅下跌</span>
        </Alert>
        <button>[全部]</button>
        <NewsSep $gap={4} />
        <BarSearch aria-label="搜索">
          <SearchGlyph size={16} color="#a8a8a8" width={2.4} />
          <input type="text" />
        </BarSearch>
        <NewsTool $near aria-label="消息"><BellIcon /></NewsTool>
        <NewsTool aria-label="信号"><SignalIcon /></NewsTool>
        <Clock><span>CN</span><span>12/03</span><span>14:12:43</span></Clock>
      </NewsBar>

      <Taskbar>
        <button aria-label="开始"><WindowsLogo /></button>
        <TaskSearch>
          <SearchGlyph size={23} color="#1c1c1c" width={2.4} />
          <input type="text" placeholder="搜索" aria-label="搜索" />
          <AccessArt />
        </TaskSearch>
        <TaskApp aria-label="Edge"><EdgeLogo /></TaskApp>
        <TaskApp aria-label="文件资源管理器"><FolderIcon /></TaskApp>
        <TaskApp $running aria-label="浏览器"><BrowserIcon /></TaskApp>
        <TaskApp $active aria-label="行情"><BrokerLogo /></TaskApp>
        <Tray>
          <TrayBtn $gap={26} aria-label="更多图标">
            <svg width="16" height="10" viewBox="0 0 16 10" fill="none" stroke="#1c1c1c" strokeWidth="2"><path d="M1 9l7-7 7 7" /></svg>
          </TrayBtn>
          <TrayBtn $gap={26} aria-label="安全卫士"><GuardIcon /></TrayBtn>
          <TrayBtn $gap={26}>中</TrayBtn>
          <TrayBtn $gap={12} aria-label="网络"><WifiIcon /></TrayBtn>
          <TrayBtn $gap={12} aria-label="音量"><VolumeIcon /></TrayBtn>
          <TrayBtn $gap={26} aria-label="电池"><BatteryIcon /></TrayBtn>
          <TrayTime>
            <div>14:12</div>
            <div>2025/12/3</div>
          </TrayTime>
          <button aria-label="通知"><SnoozeIcon /></button>
        </Tray>
      </Taskbar>
    </Page>
  );
}
